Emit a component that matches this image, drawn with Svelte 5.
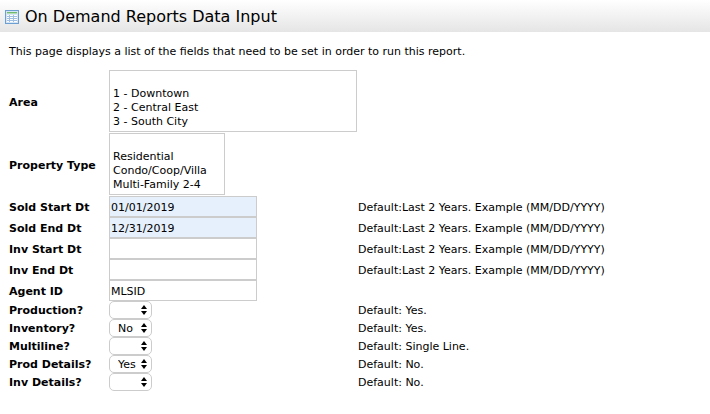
<script lang="ts">
  type Field = {
    id: string;
    label: string;
    kind: 'list' | 'text' | 'choice';
    value?: string;
    options?: string[];
    hint?: string;
    wide?: boolean;
  };

  const dateHint = 'Default:Last 2 Years. Example (MM/DD/YYYY)';
  const yesNo = ['', 'Yes', 'No'];

  let fields: Field[] = $state([
    {
      id: 'area',
      label: 'Area',
      kind: 'list',
      options: ['', '1 - Downtown', '2 - Central East', '3 - South City'],
      wide: true
    },
    {
      id: 'property-type',
      label: 'Property Type',
      kind: 'list',
      options: ['', 'Residential', 'Condo/Coop/Villa', 'Multi-Family 2-4']
    },
    { id: 'sold-start', label: 'Sold Start Dt', kind: 'text', value: '01/01/2019', hint: dateHint },
    { id: 'sold-end', label: 'Sold End Dt', kind: 'text', value: '12/31/2019', hint: dateHint },
    { id: 'inv-start', label: 'Inv Start Dt', kind: 'text', value: '', hint: dateHint },
    { id: 'inv-end', label: 'Inv End Dt', kind: 'text', value: '', hint: dateHint },
    { id: 'agent', label: 'Agent ID', kind: 'text', value: 'MLSID' },
    { id: 'production', label: 'Production?', kind: 'choice', value: '', options: yesNo, hint: 'Default: Yes.' },
    { id: 'inventory', label: 'Inventory?', kind: 'choice', value: 'No', options: yesNo, hint: 'Default: Yes.' },
    { id: 'multiline', label: 'Multiline?', kind: 'choice', value: '', options: yesNo, hint: 'Default: Single Line.' },
    { id: 'prod-details', label: 'Prod Details?', kind: 'choice', value: 'Yes', options: yesNo, hint: 'Default: No.' },
    { id: 'inv-details', label: 'Inv Details?', kind: 'choice', value: '', options: yesNo, hint: 'Default: No.' }
  ]);

  // dates that are set get the blue background
  function isDateSet(field: Field) {
    return field.hint === dateHint && field.value !== '';
  }
</script>

<header>
  <svg class="icon" width="14" height="14" viewBox="0 0 14 14" aria-hidden="true" shape-rendering="crispEdges">
    <rect width="14" height="14" fill="#6d9fd2" />
    <rect x="1" y="1" width="12" height="12" fill="#d3e5f7" />
    <rect x="2" y="2" width="10" height="1" fill="#6fba6f" />
    <rect x="2" y="3" width="10" height="1" fill="#b5dcb5" />
    <rect x="2" y="5" width="10" height="7" fill="#9fc0e3" />
    <path
      d="M2 5h2v1h-2zM5 5h3v1h-3zM9 5h3v1h-3zM2 7h2v1h-2zM5 7h3v1h-3zM9 7h3v1h-3zM2 9h2v1h-2zM5 9h3v1h-3zM9 9h3v1h-3zM2 11h2v1h-2zM5 11h3v1h-3zM9 11h3v1h-3z"
      fill="#fff"
    />
  </svg>
  <h1>On Demand Reports Data Input</h1>
</header>

<main>
  <p>This page displays a list of the fields that need to be set in order to run this report.</p>

  <form>
    {#each fields as field (field.id)}
      <div class="row">
        <label for={field.id}>{field.label}</label>

        {#if field.kind === 'list'}
          <select id={field.id} class="list" class:wide={field.wide} multiple size="4">
            {#each field.options ?? [] as option}
              <option value={option}>{option}</option>
            {/each}
          </select>
        {:else if field.kind === 'text'}
          <input id={field.id} type="text" class:filled={isDateSet(field)} bind:value={field.value} />
        {:else}
          <span class="choice">
            <select id={field.id} bind:value={field.value}>
              {#each field.options ?? [] as option}
                <option value={option}>{option}</option>
              {/each}
            </select>
            <svg width="6" height="10" viewBox="0 0 6 10" aria-hidden="true">
              <path d="M3 0l3 4H0zM3 10L0 6h6z" fill="#000" />
            </svg>
          </span>
        {/if}

        {#if field.hint}
          <span class="hint">{field.hint}</span>
        {/if}
      </div>
    {/each}
  </form>
</main>

<style>
  :global(body) {
    background: #fff;
    color: #000;
    font-family: Verdana, 'DejaVu Sans', sans-serif;
    font-size: 11px;
    line-height: 14px;
  }

  header {
    display: flex;
    align-items: center;
    gap: 6px;
    box-sizing: border-box;
    height: 32px;
    padding: 2px 5px 0;
    background: linear-gradient(#fff, #e5e5e5);
  }

  .icon {
    flex: none;
  }

  h1 {
    margin: 0;
    font-size: 16px;
    font-weight: normal;
    line-height: 20px;
  }

  main {
    padding: 13px 9px;
  }

  p {
    margin: 0 0 11px;
  }

  .row {
    display: grid;
    grid-template-columns: 100px 249px 1fr;
    align-items: center;
    justify-items: start;
  }

  label,
  .hint {
    padding-top: 2px;
  }

  label {
    font-weight: bold;
  }

  input,
  select {
    box-sizing: border-box;
    margin: 0;
    border: 1px solid #ccc;
    border-radius: 0;
    background: #fff;
    color: #000;
    font: inherit;
  }

  input {
    width: 148px;
    height: 21px;
    padding: 2px 1px 0;
  }

  input.filled {
    background: #e6f0fc;
  }

  .list {
    width: 116px;
    height: 62px;
    margin-bottom: 1px;
    padding: 2px 0;
    overflow-y: auto;
    scrollbar-width: none;
  }

  .list.wide {
    width: 248px;
  }

  .list option {
    height: 14px;
    min-height: 14px;
    padding: 0 3px;
    line-height: 14px;
  }

  .choice {
    display: grid;
    align-items: center;
  }

  .choice select,
  .choice svg {
    grid-area: 1 / 1;
  }

  .choice select {
    appearance: none;
    width: 43px;
    height: 18px;
    padding: 2px 0 0 8px;
    border-radius: 5px;
  }

  .choice svg {
    justify-self: end;
    margin-right: 5px;
    pointer-events: none;
  }

  .hint {
    white-space: nowrap;
  }
</style>
